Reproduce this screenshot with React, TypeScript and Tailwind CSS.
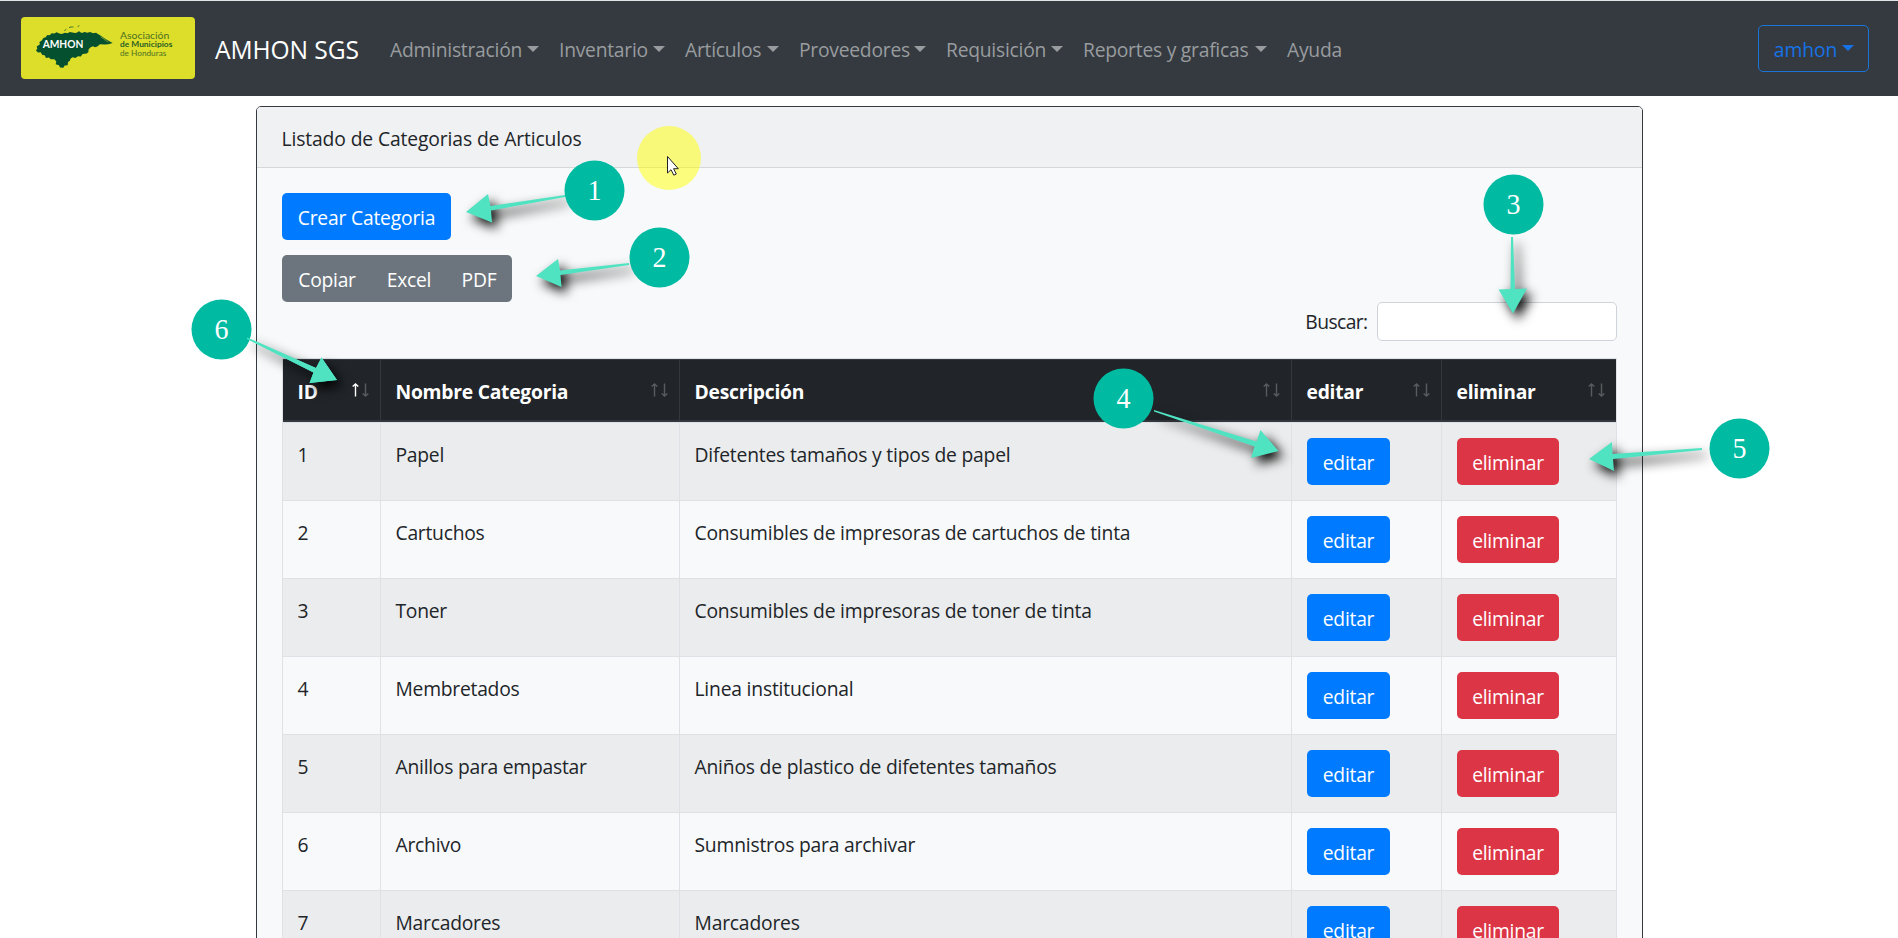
import type { ReactNode } from "react";

const menus = ["Administración", "Inventario", "Artículos", "Proveedores", "Requisición", "Reportes y graficas"];
const menuWidths = ["w-[132px]", "w-[89px]", "w-[77px]", "w-[110px]", "w-[100px]", "w-[167px]"];

const columns = [
  { label: "ID", width: "w-[98px]" },
  { label: "Nombre Categoria", width: "w-[299px]" },
  { label: "Descripción", width: "w-[612px]" },
  { label: "editar", width: "w-[150px]" },
  { label: "eliminar", width: "w-[174px]" },
];

const rows = [
  ["Papel", "Difetentes tamaños y tipos de papel"],
  ["Cartuchos", "Consumibles de impresoras de cartuchos de tinta"],
  ["Toner", "Consumibles de impresoras de toner de tinta"],
  ["Membretados", "Linea institucional"],
  ["Anillos para empastar", "Aniños de plastico de difetentes tamaños"],
  ["Archivo", "Sumnistros para archivar"],
  ["Marcadores", "Marcadores"],
];

const badges = [
  { n: 1, x: 594.5, y: 190.5 },
  { n: 2, x: 659.5, y: 257.5 },
  { n: 3, x: 1513.5, y: 204.5 },
  { n: 4, x: 1123.5, y: 398.5 },
  { n: 5, x: 1739.5, y: 448.5 },
  { n: 6, x: 221.5, y: 329.5 },
];

const arrows = [
  "565,195 490.5,206 488,194 466,212 492,222.5 491,210.5 565,197",
  "629,263 560,270.5 558,259 536,276 561.5,287 560.5,275 629,265",
  "1511,237 1510.5,289 1498.5,289.5 1513,313.5 1527,288.5 1515,289 1513,237",
  "1154,410 1256.5,441.5 1260.5,430 1278.5,451 1251,458 1254.5,446.5 1154,411.5",
  "1702,448 1612.5,454 1612,442 1589,459 1614,471 1613,459 1702,450",
  "247,337.5 316,368 321.5,357.5 337,380 309.5,383 313.5,372.5 247,339",
];

function Caret() {
  return <span className="ml-[5px] mb-[3px] h-0 w-0 border-x-[6px] border-t-[6px] border-x-transparent border-t-current" />;
}

function SortIcon({ active }: { active: boolean }) {
  return (
    <svg className="mt-[6px] h-[14px] w-[17px] shrink-0" viewBox="0 0 17 14" fill="none" strokeWidth="1.4">
      <path d="M3.5 13.5V1M0.7 3.6L3.5 1L6.3 3.6" stroke={active ? "#ffffff" : "#595c5f"} />
      <path d="M13.5 0.5V13M10.7 10.4L13.5 13L16.3 10.4" stroke="#595c5f" />
    </svg>
  );
}

function Button({ className, children }: { className: string; children: ReactNode }) {
  return (
    <button className={"flex h-[47px] items-center justify-center pt-[2px] pl-px text-white " + className}>{children}</button>
  );
}

function Logo() {
  return (
    <svg className="mb-px mr-5 h-[62.5px] w-[174px] rounded" viewBox="33 21 522 188" preserveAspectRatio="none">
      <rect x="33" y="21" width="522" height="188" fill="#dcde2a" />
      <path
        d="M78 122L82 116L80 110L90 103L88 97L96 91L100 84L107 82L112 75L119 76L125 70L133 71L140 67L148 71L155 72L165 68L172 70L180 66L195 69L200 68L207 64L215 69L224 66L232 68L240 66L250 70L258 68L265 73L270 76L282 84L298 94L308 99L295 103L283 104L270 103L262 110L255 112L249 109L242 112L236 118L235 127L230 131L218 132L212 140L204 139L196 144L188 142L182 146L179 153L174 156L173 166L164 167L160 174L150 173L147 166L137 163L139 155L133 148L122 148L117 143L108 144L104 136L97 135L92 127L84 128Z"
        fill="#04502f"
      />
      <path d="M272 81L287 90L284 92M288 92L295 97" stroke="#dcde2a" strokeWidth="1.5" fill="none" />
      <path d="M163 62L169 58M177 53L183 51L190 51M203 50L208 47" stroke="#04502f" strokeWidth="2.2" fill="none" />
      <g className="font-['Lato',sans-serif] tracking-normal">
        <text x="98" y="115" fontSize="33" fontWeight="700" fill="#ffffff" textLength="122" lengthAdjust="spacingAndGlyphs">AMHON</text>
        <g fill="#4d7022">
          <text x="330" y="87" fontSize="29" fontWeight="400" textLength="148" lengthAdjust="spacingAndGlyphs">Asociación</text>
          <text x="330" y="111" fontSize="25" fontWeight="700" fill="#2c5f24" textLength="157" lengthAdjust="spacingAndGlyphs">de Municipios</text>
          <text x="330" y="137" fontSize="25" fontWeight="400" textLength="139" lengthAdjust="spacingAndGlyphs">de Honduras</text>
        </g>
      </g>
    </svg>
  );
}

function Navbar() {
  return (
    <nav className="flex h-24 items-center border-t border-[#dfe5e6] bg-[#343a40] pl-[21px] pr-[29px]">
      <Logo />
      <span className="w-[155px] pt-0.5 text-[24.6px] tracking-[-0.1px] text-white">AMHON SGS</span>
      <ul className="flex grow gap-5 pl-5 pt-[3px] text-[#999c9f]">
        {menus.map((m, i) => (
          <li key={m} className="flex items-center">
            <span className={menuWidths[i]}>{m}</span>
            <Caret />
          </li>
        ))}
        <li>Ayuda</li>
      </ul>
      <Button className="w-[111px] rounded-[5px] border border-[#1b74d8] text-[#1672e6]!">
        <span className="tracking-[-0.1px]">amhon</span>
        <Caret />
      </Button>
    </nav>
  );
}

function CategoryTable() {
  return (
    <table className="mt-[17px] w-[1335px] table-fixed border-separate border-spacing-0 border border-[#dee2e6]">
      <thead>
        <tr className="h-[63px] bg-[#212529] text-white">
          {columns.map((c, i) => (
            <th key={c.label} className={"border-t border-b-2 border-r border-[#32383e] pl-[15px] pr-[11px] pt-1 text-left align-middle font-bold last:border-r-0 " + c.width}>
              <div className="flex items-start justify-between">
                {c.label}
                <SortIcon active={i === 0} />
              </div>
            </th>
          ))}
        </tr>
      </thead>
      <tbody className="[&_td]:border-t [&_td]:border-r [&_td]:border-[#dee2e6] [&_td]:pl-[15px] [&_td]:pt-[15px] [&_td]:align-top [&_td:last-child]:border-r-0">
        {rows.map(([name, description], i) => (
          <tr key={name} className="h-[78px] odd:bg-[#ebeced]">
            <td><p className="pt-0.5">{i + 1}</p></td>
            <td><p className="pt-0.5">{name}</p></td>
            <td><p className="pt-0.5 tracking-[-0.2px]">{description}</p></td>
            <td><Button className="w-[83px] rounded-[5px] bg-[#007bff]">editar</Button></td>
            <td><Button className="w-[102px] rounded-[5px] bg-[#dc3545]">eliminar</Button></td>
          </tr>
        ))}
      </tbody>
    </table>
  );
}

function Annotations() {
  return (
    <svg className="pointer-events-none absolute inset-0 h-[938px] w-[1898px]" viewBox="0 0 1898 938">
      <defs>
        <filter id="soft" x="0" y="0" width="1898" height="938" filterUnits="userSpaceOnUse" colorInterpolationFilters="sRGB">
          <feDropShadow dx="5" dy="6" stdDeviation="6" floodColor="#000000" floodOpacity="1" />
        </filter>
      </defs>
      <circle cx="669" cy="158" r="32" fill="#ffff00" fillOpacity="0.5" />
      <path d="M667.5 156.5V173L671 169.7L673.8 175.2L676.3 174L673.6 168.7H678.3Z" fill="#ffffff" stroke="#222222" strokeWidth="1" />
      <g fill="#50e3c2" filter="url(#soft)">
        {arrows.map((points) => (
          <polygon key={points} points={points} />
        ))}
      </g>
      {badges.map((b) => (
        <g key={b.n}>
          <circle cx={b.x} cy={b.y} r="30" fill="#00bba2" />
          <text x={b.x} y={b.y + 9.5} textAnchor="middle" className="font-['Liberation_Serif',serif] text-[30px] tracking-normal" textLength="14" lengthAdjust="spacingAndGlyphs" fill="#ffffff">{b.n}</text>
        </g>
      ))}
      <polygon points={arrows[5]} fill="#50e3c2" />
    </svg>
  );
}

export default function App() {
  return (
    <div className="relative h-[938px] w-[1898px] overflow-hidden bg-white font-['Open_Sans',sans-serif] text-[19.3px] leading-[30px] tracking-[-0.25px] text-[#212529]">
      <Navbar />
      <main className="mx-auto mt-2.5 w-[1387px] overflow-hidden rounded-[5px] border border-[#343a40] bg-[#f8f9fa]">
        <header className="flex h-[61px] items-center border-b border-[#d5d7d9] bg-[#f0f1f2] px-[25px] pt-1 tracking-[-0.12px]">
          Listado de Categorias de Articulos
        </header>
        <section className="px-[25px] pt-[25px]">
          <Button className="w-[169px] rounded-[5px] bg-[#007bff] tracking-[-0.2px]">Crear Categoria</Button>
          <div className="mt-[15px] flex w-[230px] overflow-hidden rounded-[5px] bg-[#6c757d]">
            <Button className="w-[90px]">Copiar</Button>
            <Button className="w-[74px]">Excel</Button>
            <Button className="w-[66px]">PDF</Button>
          </div>
          <label className="flex items-center justify-end gap-[9px]">
            <span className="tracking-[-0.6px]">Buscar:</span>
            <input className="h-[39px] w-[240px] rounded-[5px] border border-[#ced4da] bg-white" />
          </label>
          <CategoryTable />
        </section>
      </main>
      <Annotations />
    </div>
  );
}
